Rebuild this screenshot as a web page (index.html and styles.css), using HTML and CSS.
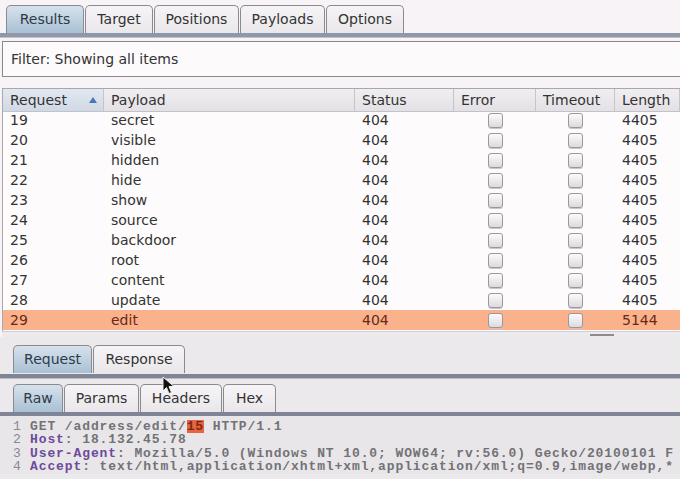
FILE: index.html
```html
<!DOCTYPE html>
<html>
<head>
<meta charset="utf-8">
<link rel="stylesheet" href="styles.css">
</head>
<body>
<div class="page">
  <div class="tabs top-tabs">
    <div class="tab sel w78">Results</div>
    <div class="tab w68">Target</div>
    <div class="tab w85">Positions</div>
    <div class="tab w85">Payloads</div>
    <div class="tab w78">Options</div>
  </div>
  <div class="filter">Filter: Showing all items</div>
  <div class="table">
    <div class="row head">
      <div class="c c1 sorted">Request <span class="arrow"></span></div>
      <div class="c c2">Payload</div>
      <div class="c c3">Status</div>
      <div class="c c4">Error</div>
      <div class="c c5">Timeout</div>
      <div class="c c6">Length</div>
    </div>
    <div class="body">
      <div class="row first"><div class="c c1">19</div><div class="c c2">secret</div><div class="c c3">404</div><div class="c c4"><span class="cb"></span></div><div class="c c5"><span class="cb"></span></div><div class="c c6">4405</div></div>
      <div class="row"><div class="c c1">20</div><div class="c c2">visible</div><div class="c c3">404</div><div class="c c4"><span class="cb"></span></div><div class="c c5"><span class="cb"></span></div><div class="c c6">4405</div></div>
      <div class="row"><div class="c c1">21</div><div class="c c2">hidden</div><div class="c c3">404</div><div class="c c4"><span class="cb"></span></div><div class="c c5"><span class="cb"></span></div><div class="c c6">4405</div></div>
      <div class="row"><div class="c c1">22</div><div class="c c2">hide</div><div class="c c3">404</div><div class="c c4"><span class="cb"></span></div><div class="c c5"><span class="cb"></span></div><div class="c c6">4405</div></div>
      <div class="row"><div class="c c1">23</div><div class="c c2">show</div><div class="c c3">404</div><div class="c c4"><span class="cb"></span></div><div class="c c5"><span class="cb"></span></div><div class="c c6">4405</div></div>
      <div class="row"><div class="c c1">24</div><div class="c c2">source</div><div class="c c3">404</div><div class="c c4"><span class="cb"></span></div><div class="c c5"><span class="cb"></span></div><div class="c c6">4405</div></div>
      <div class="row"><div class="c c1">25</div><div class="c c2">backdoor</div><div class="c c3">404</div><div class="c c4"><span class="cb"></span></div><div class="c c5"><span class="cb"></span></div><div class="c c6">4405</div></div>
      <div class="row"><div class="c c1">26</div><div class="c c2">root</div><div class="c c3">404</div><div class="c c4"><span class="cb"></span></div><div class="c c5"><span class="cb"></span></div><div class="c c6">4405</div></div>
      <div class="row"><div class="c c1">27</div><div class="c c2">content</div><div class="c c3">404</div><div class="c c4"><span class="cb"></span></div><div class="c c5"><span class="cb"></span></div><div class="c c6">4405</div></div>
      <div class="row"><div class="c c1">28</div><div class="c c2">update</div><div class="c c3">404</div><div class="c c4"><span class="cb"></span></div><div class="c c5"><span class="cb"></span></div><div class="c c6">4405</div></div>
      <div class="row hl"><div class="c c1">29</div><div class="c c2">edit</div><div class="c c3">404</div><div class="c c4"><span class="cb"></span></div><div class="c c5"><span class="cb"></span></div><div class="c c6">5144</div></div>
    </div>
  </div>
  <div class="hscroll"><span class="thumb"></span></div>
  <div class="lower">
    <div class="tabs sub-tabs">
      <div class="tab sel w79">Request</div>
      <div class="tab w92">Response</div>
    </div>
    <div class="tabs sub-tabs second">
      <div class="tab sel w50">Raw</div>
      <div class="tab w75">Params</div>
      <div class="tab w82">Headers</div>
      <div class="tab w53">Hex</div>
    </div>
    <div class="code">
      <div class="ln"><span class="num">1</span><span class="txt">GET /address/edit/<span class="mark">15</span> HTTP/1.1</span></div>
      <div class="ln"><span class="num">2</span><span class="txt"><span class="key">Host</span>: 18.132.45.78</span></div>
      <div class="ln"><span class="num">3</span><span class="txt"><span class="key">User-Agent</span>: Mozilla/5.0 (Windows NT 10.0; WOW64; rv:56.0) Gecko/20100101 F</span></div>
      <div class="ln"><span class="num">4</span><span class="txt"><span class="key">Accept</span>: text/html,application/xhtml+xml,application/xml;q=0.9,image/webp,*</span></div>
    </div>
  </div>
  <svg class="cursor" width="14" height="20" viewBox="0 0 14 20"><path d="M1 1 L1 15 L4.5 11.5 L7 17.5 L9.5 16.5 L7 10.5 L12 10.5 Z" fill="#111" stroke="#eee" stroke-width="1"/></svg>
</div>
</body>
</html>
```

FILE: styles.css
```css
* { box-sizing: border-box; }
html, body { margin: 0; padding: 0; }
body {
  width: 680px;
  height: 479px;
  overflow: hidden;
  font-family: "DejaVu Sans", sans-serif;
  font-size: 14px;
  color: #333;
  background: #f8f3f6;
}
.page { position: relative; width: 680px; height: 479px; overflow: hidden; }

.tabs { display: flex; }
.top-tabs {
  padding: 5px 0 0 6px;
  height: 37px;
  border-bottom: 4px solid #8f98ab;
  box-shadow: 0 1px 0 #c4c1c8;
}
.tab {
  height: 28px;
  line-height: 27px;
  padding: 0;
  text-align: center;
  border: 1px solid #8b8b8f;
  border-bottom: none;
  border-radius: 5px 5px 0 0;
  background: linear-gradient(#f6f4f6, #e9e7ea);
  margin-right: 1px;
  color: #333;
  white-space: nowrap;
}
.tab.sel {
  background: linear-gradient(#d6e2ec, #a9c0d4);
  color: #2e3a48;
}
.w50 { width: 50px; }
.w53 { width: 53px; }
.w68 { width: 68px; }
.w75 { width: 75px; }
.w78 { width: 78px; }
.w79 { width: 79px; }
.w82 { width: 82px; }
.w85 { width: 85px; }
.w92 { width: 92px; }

.filter {
  margin: 4px 0 0 2px;
  height: 36px;
  line-height: 34px;
  padding-left: 8px;
  border: 1px solid #8a888d;
  border-right: none;
  background: #fdfafc;
}

.table {
  margin: 11px 0 0 2px;
  border-left: 1px solid #aaa7ad;
  border-top: 1px solid #a9a6ac;
  background: #fdfbfc;
}
.row { display: flex; height: 20px; line-height: 20px; }
.row.head {
  height: 23px;
  line-height: 23px;
  background: linear-gradient(#f0eef1, #e3e1e5);
  border-bottom: 1px solid #c4c2c7;
}
.row.head .c { border-right: 1px solid #c6c4c9; }
.row.head .sorted { background: linear-gradient(#e2e8f0, #cfd9e5); position: relative; }
.arrow {
  position: absolute;
  left: 86px;
  top: 8px;
  width: 0; height: 0;
  border-left: 4px solid transparent;
  border-right: 4px solid transparent;
  border-bottom: 6px solid #4a78b0;
}
.c { padding-left: 7px; white-space: nowrap; overflow: hidden; }
.c1 { width: 101px; }
.c2 { width: 251px; }
.c3 { width: 99px; }
.c4 { width: 82px; padding-left: 0; display: flex; justify-content: center; align-items: center; }
.c5 { width: 79px; padding-left: 0; display: flex; justify-content: center; align-items: center; }
.c6 { flex: 1; }
.row.head .c4, .row.head .c5 { justify-content: flex-start; padding-left: 7px; }
.body { height: 219px; overflow: hidden; }
.row.first { margin-top: -2px; }
.row.hl { background: #f9b28c; color: #6b2710; }
.cb {
  display: block;
  width: 15px;
  height: 15px;
  border: 1px solid #9a989d;
  border-radius: 3px;
  background: linear-gradient(#fbfbfc, #dcdade);
  box-shadow: 0 1px 0 #c9c7cb;
}

.hscroll {
  height: 6px;
  margin-left: 2px;
  border-top: 1px solid #d1cfd4;
  background: #eceaed;
  position: relative;
}
.thumb {
  position: absolute;
  left: 588px;
  top: 2px;
  width: 24px;
  height: 2px;
  background: #8e8c91;
}

.lower { background: #ebe9ec; height: 200px; padding-top: 8px; }
.sub-tabs {
  padding-left: 13px;
  height: 33px;
  border-bottom: 4px solid #7f8597;
  box-shadow: 0 1px 0 #bdbbc2;
}
.sub-tabs.second { margin-top: 6px; height: 32px; }

.code {
  padding-top: 4px;
  font-family: "Liberation Mono", "Courier New", monospace;
  font-size: 13px;
  letter-spacing: 0.9px;
  line-height: 13.4px;
  font-weight: bold;
  color: #737276;
  background: #e8e6e9;
}
.ln { white-space: pre; overflow: hidden; height: 13.4px; }
.num { display: inline-block; width: 30px; padding-left: 13px; color: #8b898e; font-weight: normal; letter-spacing: 0; }
.key { color: #6e4a9c; }
.mark { background: #e8633f; color: #7a2a14; }

.cursor { position: absolute; left: 162px; top: 376px; }
```
